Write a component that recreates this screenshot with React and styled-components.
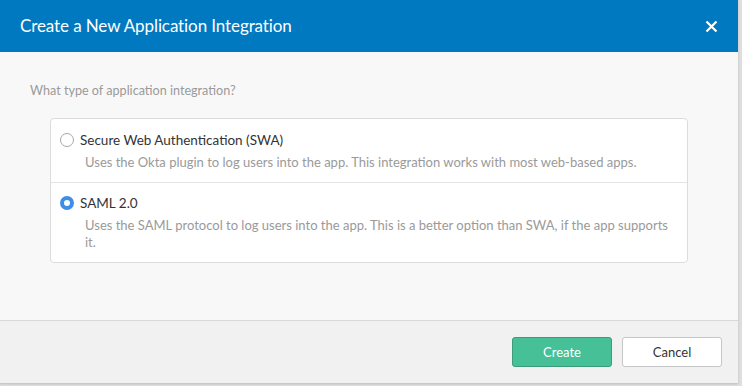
import React, { useState } from 'react'
import styled, { createGlobalStyle } from 'styled-components'

const GlobalStyle = createGlobalStyle`
  html, body {
    margin: 0;
    padding: 0;
    background: #dcdcdc;
  }
  body {
    font-family: Lato, "Open Sans", Arial, sans-serif;
    -webkit-font-smoothing: antialiased;
  }
`

const Page = styled.div`
  width: 742px;
  height: 386px;
  display: flex;
  background: #dedede;
`

const Dialog = styled.div`
  width: 738px;
  height: 383px;
  display: flex;
  flex-direction: column;
  background: #f8f8f8;
  box-shadow: 0 1px 2px rgba(0, 0, 0, 0.15);
`

const Header = styled.div`
  height: 52px;
  flex: none;
  display: flex;
  align-items: center;
  justify-content: space-between;
  padding: 0 20px 0 20px;
  background: #0079c1;
  color: #fff;
`

const Title = styled.h1`
  margin: 0 0 1px;
  font-size: 17px;
  font-weight: 400;
  letter-spacing: -0.1px;
`

const CloseButton = styled.button`
  display: flex;
  padding: 0;
  border: none;
  background: none;
  color: #fff;
  cursor: pointer;
`

const Body = styled.div`
  flex: 1;
  padding: 30px 50px 0 30px;
`

const Question = styled.p`
  margin: 0 0 19px;
  font-size: 12.6px;
  line-height: 17px;
  color: #9a9a9a;
`

const OptionList = styled.div`
  margin-left: 20px;
  background: #fff;
  border: 1px solid #dcdcdc;
  border-radius: 4px;
`

const Option = styled.label`
  display: grid;
  grid-template-columns: 14px 1fr;
  column-gap: 6px;
  padding: 13px 8px 11px 9px;
  cursor: pointer;
  & + & {
    border-top: 1px solid #e3e3e3;
    padding-top: 12px;
  }
`

const Radio = styled.span`
  width: 14px;
  height: 14px;
  box-sizing: border-box;
  margin-top: 1px;
  border-radius: 50%;
  border: ${p => (p.checked ? '4.5px solid #3c8ee8' : '1px solid #a8a8a8')};
  background: #fff;
`

const OptionLabel = styled.span`
  font-size: 13.5px;
  line-height: 16px;
  color: #333;
`

const OptionDesc = styled.span`
  grid-column: 2;
  margin: 6px 0 0 5px;
  font-size: 13px;
  line-height: 17px;
  color: #9a9a9a;
`

const Footer = styled.div`
  height: 63px;
  flex: none;
  display: flex;
  justify-content: flex-end;
  align-items: flex-start;
  gap: 10px;
  padding: 16px 16px 0 0;
  box-sizing: border-box;
  background: #f1f1f1;
  border-top: 1px solid #d8d8d8;
`

const Button = styled.button`
  width: 100px;
  height: 30px;
  border-radius: 3px;
  font-family: inherit;
  font-size: 13px;
  cursor: pointer;
  border: 1px solid ${p => (p.primary ? '#3c9c7c' : '#c6c6c6')};
  background: ${p => (p.primary ? '#46c097' : '#fff')};
  color: ${p => (p.primary ? '#fff' : '#333')};
`

const options = [
  {
    id: 'swa',
    label: 'Secure Web Authentication (SWA)',
    desc: 'Uses the Okta plugin to log users into the app. This integration works with most web-based apps.',
  },
  {
    id: 'saml',
    label: 'SAML 2.0',
    desc: 'Uses the SAML protocol to log users into the app. This is a better option than SWA, if the app supports it.',
  },
]

const App = () => {
  const [selected, setSelected] = useState('saml')

  return (
    <Page>
      <GlobalStyle />
      <Dialog>
        <Header>
          <Title>Create a New Application Integration</Title>
          <CloseButton aria-label="Close">
            <svg width="13" height="13" viewBox="0 0 13 13">
              <path d="M1.5 1.5l10 10M11.5 1.5l-10 10" stroke="#fff" strokeWidth="2.2" />
            </svg>
          </CloseButton>
        </Header>
        <Body>
          <Question>What type of application integration?</Question>
          <OptionList>
            {options.map(o => (
              <Option key={o.id} onClick={() => setSelected(o.id)}>
                <Radio checked={selected === o.id} />
                <OptionLabel>{o.label}</OptionLabel>
                <OptionDesc>{o.desc}</OptionDesc>
              </Option>
            ))}
          </OptionList>
        </Body>
        <Footer>
          <Button primary>Create</Button>
          <Button>Cancel</Button>
        </Footer>
      </Dialog>
    </Page>
  )
}

export default App
